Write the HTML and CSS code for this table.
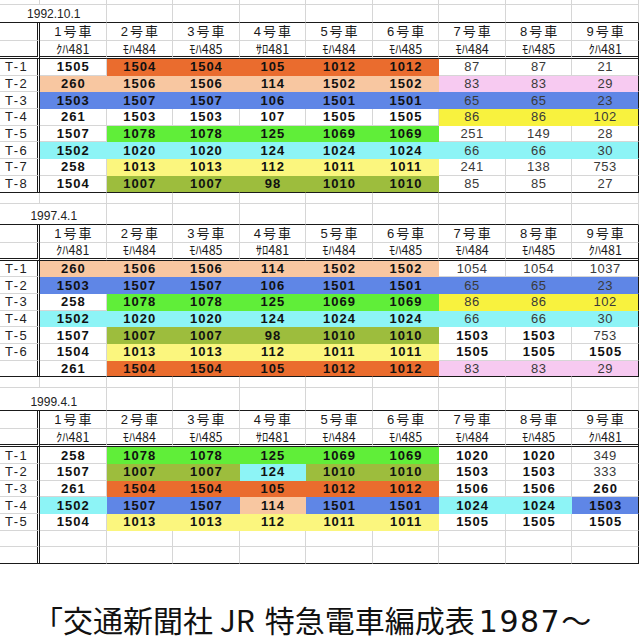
FILE: index.html
```html
<!DOCTYPE html>
<html lang="ja">
<head>
<meta charset="utf-8">
<title>編成表</title>
<link rel="stylesheet" href="styles.css">
</head>
<body>
<div class="sheet">
  <div class="row stub"><div class="c"></div><div class="c"></div><div class="c"></div><div class="c"></div><div class="c"></div><div class="c"></div><div class="c"></div><div class="c"></div><div class="c"></div><div class="c"></div></div>
  <div class="row title t1"><div class="c date">1992.10.1</div><div class="c"></div><div class="c"></div><div class="c"></div><div class="c"></div><div class="c"></div><div class="c"></div><div class="c"></div><div class="c"></div></div>
  <div class="tbl">
    <div class="row h1"><div class="c"></div><div class="c">1号車</div><div class="c">2号車</div><div class="c">3号車</div><div class="c">4号車</div><div class="c">5号車</div><div class="c">6号車</div><div class="c">7号車</div><div class="c">8号車</div><div class="c">9号車</div></div>
    <div class="row h2"><div class="c"></div><div class="c">ｸﾊ481</div><div class="c">ﾓﾊ484</div><div class="c">ﾓﾊ485</div><div class="c">ｻﾛ481</div><div class="c">ﾓﾊ484</div><div class="c">ﾓﾊ485</div><div class="c">ﾓﾊ484</div><div class="c">ﾓﾊ485</div><div class="c">ｸﾊ481</div></div>
    <div class="row data"><div class="c lab">T-1</div><div class="c b">1505</div><div class="c b or">1504</div><div class="c b or">1504</div><div class="c b or">105</div><div class="c b or">1012</div><div class="c b or">1012</div><div class="c n">87</div><div class="c n">87</div><div class="c n">21</div></div>
    <div class="row data"><div class="c lab">T-2</div><div class="c b pe">260</div><div class="c b pe">1506</div><div class="c b pe">1506</div><div class="c b pe">114</div><div class="c b pe">1502</div><div class="c b pe">1502</div><div class="c n pk">83</div><div class="c n pk">83</div><div class="c n pk">29</div></div>
    <div class="row data"><div class="c lab">T-3</div><div class="c b bl">1503</div><div class="c b bl">1507</div><div class="c b bl">1507</div><div class="c b bl">106</div><div class="c b bl">1501</div><div class="c b bl">1501</div><div class="c n bl">65</div><div class="c n bl">65</div><div class="c n bl">23</div></div>
    <div class="row data"><div class="c lab">T-4</div><div class="c b">261</div><div class="c b">1503</div><div class="c b">1503</div><div class="c b">107</div><div class="c b">1505</div><div class="c b">1505</div><div class="c n y2">86</div><div class="c n y2">86</div><div class="c n y2">102</div></div>
    <div class="row data"><div class="c lab">T-5</div><div class="c b">1507</div><div class="c b gr">1078</div><div class="c b gr">1078</div><div class="c b gr">125</div><div class="c b gr">1069</div><div class="c b gr">1069</div><div class="c n">251</div><div class="c n">149</div><div class="c n">28</div></div>
    <div class="row data"><div class="c lab">T-6</div><div class="c b cy">1502</div><div class="c b cy">1020</div><div class="c b cy">1020</div><div class="c b cy">124</div><div class="c b cy">1024</div><div class="c b cy">1024</div><div class="c n cy">66</div><div class="c n cy">66</div><div class="c n cy">30</div></div>
    <div class="row data"><div class="c lab">T-7</div><div class="c b">258</div><div class="c b ye">1013</div><div class="c b ye">1013</div><div class="c b ye">112</div><div class="c b ye">1011</div><div class="c b ye">1011</div><div class="c n">241</div><div class="c n">138</div><div class="c n">753</div></div>
    <div class="row data last"><div class="c lab">T-8</div><div class="c b">1504</div><div class="c b ol">1007</div><div class="c b ol">1007</div><div class="c b ol">98</div><div class="c b ol">1010</div><div class="c b ol">1010</div><div class="c n">85</div><div class="c n">85</div><div class="c n">27</div></div>
  </div>

  <div class="row blank"><div class="c"></div><div class="c"></div><div class="c"></div><div class="c"></div><div class="c"></div><div class="c"></div><div class="c"></div><div class="c"></div><div class="c"></div><div class="c"></div></div>
  <div class="row title"><div class="c date">1997.4.1</div><div class="c"></div><div class="c"></div><div class="c"></div><div class="c"></div><div class="c"></div><div class="c"></div><div class="c"></div><div class="c"></div></div>
  <div class="tbl">
    <div class="row h1"><div class="c"></div><div class="c">1号車</div><div class="c">2号車</div><div class="c">3号車</div><div class="c">4号車</div><div class="c">5号車</div><div class="c">6号車</div><div class="c">7号車</div><div class="c">8号車</div><div class="c">9号車</div></div>
    <div class="row h2"><div class="c"></div><div class="c">ｸﾊ481</div><div class="c">ﾓﾊ484</div><div class="c">ﾓﾊ485</div><div class="c">ｻﾛ481</div><div class="c">ﾓﾊ484</div><div class="c">ﾓﾊ485</div><div class="c">ﾓﾊ484</div><div class="c">ﾓﾊ485</div><div class="c">ｸﾊ481</div></div>
    <div class="row data"><div class="c lab">T-1</div><div class="c b pe">260</div><div class="c b pe">1506</div><div class="c b pe">1506</div><div class="c b pe">114</div><div class="c b pe">1502</div><div class="c b pe">1502</div><div class="c n">1054</div><div class="c n">1054</div><div class="c n">1037</div></div>
    <div class="row data"><div class="c lab">T-2</div><div class="c b bl">1503</div><div class="c b bl">1507</div><div class="c b bl">1507</div><div class="c b bl">106</div><div class="c b bl">1501</div><div class="c b bl">1501</div><div class="c n bl">65</div><div class="c n bl">65</div><div class="c n bl">23</div></div>
    <div class="row data"><div class="c lab">T-3</div><div class="c b">258</div><div class="c b gr">1078</div><div class="c b gr">1078</div><div class="c b gr">125</div><div class="c b gr">1069</div><div class="c b gr">1069</div><div class="c n y2">86</div><div class="c n y2">86</div><div class="c n y2">102</div></div>
    <div class="row data"><div class="c lab">T-4</div><div class="c b cy">1502</div><div class="c b cy">1020</div><div class="c b cy">1020</div><div class="c b cy">124</div><div class="c b cy">1024</div><div class="c b cy">1024</div><div class="c n cy">66</div><div class="c n cy">66</div><div class="c n cy">30</div></div>
    <div class="row data"><div class="c lab">T-5</div><div class="c b">1507</div><div class="c b ol">1007</div><div class="c b ol">1007</div><div class="c b ol">98</div><div class="c b ol">1010</div><div class="c b ol">1010</div><div class="c b">1503</div><div class="c b">1503</div><div class="c n">753</div></div>
    <div class="row data"><div class="c lab">T-6</div><div class="c b">1504</div><div class="c b ye">1013</div><div class="c b ye">1013</div><div class="c b ye">112</div><div class="c b ye">1011</div><div class="c b ye">1011</div><div class="c b">1505</div><div class="c b">1505</div><div class="c b">1505</div></div>
    <div class="row data last"><div class="c lab"></div><div class="c b">261</div><div class="c b or">1504</div><div class="c b or">1504</div><div class="c b or">105</div><div class="c b or">1012</div><div class="c b or">1012</div><div class="c n pk">83</div><div class="c n pk">83</div><div class="c n pk">29</div></div>
  </div>

  <div class="row blank"><div class="c"></div><div class="c"></div><div class="c"></div><div class="c"></div><div class="c"></div><div class="c"></div><div class="c"></div><div class="c"></div><div class="c"></div><div class="c"></div></div>
  <div class="row title t3"><div class="c date">1999.4.1</div><div class="c"></div><div class="c"></div><div class="c"></div><div class="c"></div><div class="c"></div><div class="c"></div><div class="c"></div><div class="c"></div></div>
  <div class="tbl">
    <div class="row h1"><div class="c"></div><div class="c">1号車</div><div class="c">2号車</div><div class="c">3号車</div><div class="c">4号車</div><div class="c">5号車</div><div class="c">6号車</div><div class="c">7号車</div><div class="c">8号車</div><div class="c">9号車</div></div>
    <div class="row h2"><div class="c"></div><div class="c">ｸﾊ481</div><div class="c">ﾓﾊ484</div><div class="c">ﾓﾊ485</div><div class="c">ｻﾛ481</div><div class="c">ﾓﾊ484</div><div class="c">ﾓﾊ485</div><div class="c">ﾓﾊ484</div><div class="c">ﾓﾊ485</div><div class="c">ｸﾊ481</div></div>
    <div class="row data"><div class="c lab">T-1</div><div class="c b">258</div><div class="c b gr">1078</div><div class="c b gr">1078</div><div class="c b gr">125</div><div class="c b gr">1069</div><div class="c b gr">1069</div><div class="c b">1020</div><div class="c b">1020</div><div class="c n">349</div></div>
    <div class="row data"><div class="c lab">T-2</div><div class="c b">1507</div><div class="c b ol">1007</div><div class="c b ol">1007</div><div class="c b cy">124</div><div class="c b ol">1010</div><div class="c b ol">1010</div><div class="c b">1503</div><div class="c b">1503</div><div class="c n">333</div></div>
    <div class="row data"><div class="c lab">T-3</div><div class="c b">261</div><div class="c b or">1504</div><div class="c b or">1504</div><div class="c b or">105</div><div class="c b or">1012</div><div class="c b or">1012</div><div class="c b">1506</div><div class="c b">1506</div><div class="c b">260</div></div>
    <div class="row data"><div class="c lab">T-4</div><div class="c b cy">1502</div><div class="c b bl">1507</div><div class="c b bl">1507</div><div class="c b pe">114</div><div class="c b bl">1501</div><div class="c b bl">1501</div><div class="c b cy">1024</div><div class="c b cy">1024</div><div class="c b bl">1503</div></div>
    <div class="row data"><div class="c lab">T-5</div><div class="c b">1504</div><div class="c b ye">1013</div><div class="c b ye">1013</div><div class="c b ye">112</div><div class="c b ye">1011</div><div class="c b ye">1011</div><div class="c b">1505</div><div class="c b">1505</div><div class="c b">1505</div></div>
    <div class="row data"><div class="c lab"></div><div class="c"></div><div class="c"></div><div class="c"></div><div class="c"></div><div class="c"></div><div class="c"></div><div class="c"></div><div class="c"></div><div class="c"></div></div>
    <div class="row data last"><div class="c lab"></div><div class="c"></div><div class="c"></div><div class="c"></div><div class="c"></div><div class="c"></div><div class="c"></div><div class="c"></div><div class="c"></div><div class="c"></div></div>
  </div>
</div>
<p class="caption">「交通新聞社 <span class="jr">JR</span>特急電車編成表<span class="num">1987</span>～</p>
</body>
</html>
```

FILE: styles.css
```css
html, body {
  margin: 0;
  padding: 0;
  background: #ffffff;
}
body {
  width: 640px;
  height: 640px;
  overflow: hidden;
  font-family: "Liberation Sans", "Noto Sans CJK JP", sans-serif;
  color: #111111;
}
.sheet {
  width: 639px;
}
.row {
  display: grid;
  grid-template-columns: 40px repeat(9, 1fr);
  width: 639px;
}
.c {
  box-sizing: border-box;
  border-right: 1px solid #d6d6d6;
  border-bottom: 1px solid #d6d6d6;
  display: flex;
  align-items: center;
  justify-content: center;
  white-space: nowrap;
  font-size: 13px;
  line-height: 1;
}
.stub { height: 5px; }
.blank { height: 11px; }
.title { height: 21px; }
.title.t1 { height: 18px; }
.title.t3 { height: 23px; }
.title .c {
  border-bottom-color: #1a1a1a;
  align-items: flex-end;
  padding-bottom: 2px;
}
.date {
  grid-column: span 2;
  font-size: 12px;
  color: #222222;
  padding-left: 2px;
}
.h1 { height: 18px; }
.h2 { height: 18px; }
.h1 .c {
  font-family: "Liberation Sans", "Noto Sans CJK JP", sans-serif;
  font-size: 13px;
  letter-spacing: 2px;
  padding-left: 2px;
  color: #1a1a1a;
}
.h2 .c {
  font-family: "Noto Sans CJK JP", sans-serif;
  font-size: 12.5px;
  line-height: 14px;
  color: #1a1a1a;
  border-bottom: 3px double #1a1a1a;
}
.data { height: 16.7px; }
.b {
  font-weight: 700;
  letter-spacing: 1px;
  padding-left: 1px;
  color: #111111;
}
.n {
  font-weight: 400;
  letter-spacing: 0.5px;
  color: #3a3a3a;
}
.lab {
  justify-content: flex-start;
  padding-left: 5px;
  letter-spacing: 1.5px;
  color: #222222;
}
.or { background: #ea6c2e; border-color: #ea6c2e; }
.pe { background: #f8c7a1; border-color: #f8c7a1; }
.bl { background: #5f86e6; border-color: #5f86e6; }
.gr { background: #60ee39; border-color: #60ee39; }
.cy { background: #8df4f6; border-color: #8df4f6; }
.ye { background: #fbf67e; border-color: #fbf67e; }
.y2 { background: #f8f23e; border-color: #f8f23e; }
.ol { background: #9dbd3d; border-color: #9dbd3d; }
.pk { background: #f7caf1; border-color: #f7caf1; }
.tbl .row .c:first-child {
  border-right: 3px double #1a1a1a;
}
.tbl .row .c:last-child {
  border-right: 1px solid #1a1a1a;
}
.tbl .last .c {
  border-bottom: 1px solid #1a1a1a;
}
.caption {
  margin: 40px 0 0 0;
  padding-left: 33px;
  height: 30px;
  font-family: "Noto Sans CJK JP", sans-serif;
  font-size: 30px;
  line-height: 30px;
  white-space: nowrap;
  color: #111111;
}
.jr {
  margin-right: 10px;
}
.num {
  font-family: "DejaVu Sans", sans-serif;
  font-weight: 400;
  line-height: 0;
  letter-spacing: 1.5px;
  margin-left: 4px;
}
```
